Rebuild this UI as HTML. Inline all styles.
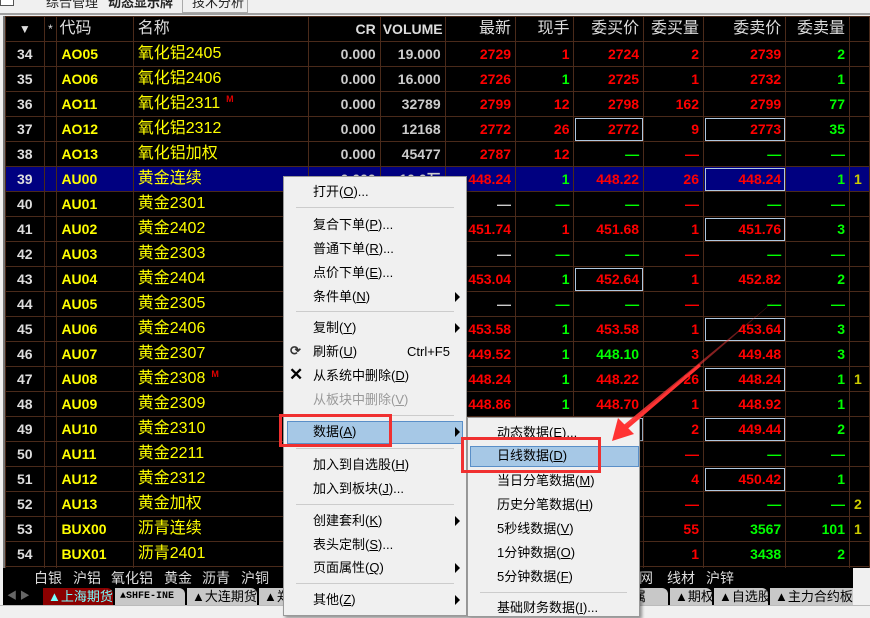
<!DOCTYPE html>
<html><head><meta charset="utf-8">
<style>
*{margin:0;padding:0;box-sizing:border-box}
body{width:870px;height:612px;overflow:hidden;background:#f0f0f0;position:relative;font-family:"Liberation Sans","Noto Sans CJK SC",sans-serif}
#top{position:absolute;left:0;top:0;width:870px;height:15px;background:#f0f0f0;border-bottom:2px solid #a0a0a0;font-size:13px;color:#222}
#grid{position:absolute;left:3px;top:16px;width:867px;height:552px;background:#000;border-left:2px solid #777;overflow:hidden}
table{border-collapse:collapse;table-layout:fixed;position:absolute;left:0;top:0}
tr{height:25px}
td{height:25px;line-height:22px;border:1px solid #4a2a1a;padding:0 4px;font-size:14px;font-weight:bold;text-align:right;white-space:nowrap;overflow:hidden;color:#f00;vertical-align:middle}
tr.h td{color:#ddd;font-weight:normal;font-size:16px}
td.n{color:#ddd;text-align:center}
td.c{color:#ff0;text-align:left}
td.m{color:#ff0;text-align:left;font-weight:normal;font-size:16px;line-height:20px}
td.w{color:#ccc}
.g{color:#0f0}.r{color:#f00}.y{color:#cc0}.wd{color:#ccc}
.bx{outline:1px solid #b0c8e0;outline-offset:-2px}
tr.sel td{background:#000080}
sup{color:#d00;font-size:9px;font-weight:bold;vertical-align:6px;margin-left:6px;line-height:0}
#cat{position:absolute;left:3px;top:568px;width:850px;height:20px;background:#000;color:#ddd;font-size:14px;line-height:20px}
#cat span{position:absolute;white-space:nowrap}
#tabs{position:absolute;left:3px;top:588px;width:850px;height:17px;background:#000;font-size:13px;line-height:17px;overflow:hidden}
.tb{position:absolute;top:0;height:17px;background:#c8c8c8;color:#000;padding-left:5px;border-radius:0 6px 0 0;white-space:nowrap;overflow:hidden}
#menu{position:absolute;left:283px;top:176px;width:184px;height:440px;background:#f0f0f0;border:1px solid #999;box-shadow:2px 2px 3px rgba(0,0,0,.4);font-size:13px;color:#000}
#sub{position:absolute;left:467px;top:417px;width:173px;height:200px;background:#f0f0f0;border:1px solid #999;box-shadow:2px 2px 3px rgba(0,0,0,.4);font-size:13px;color:#000}
.it{position:absolute;left:29px;height:20px;line-height:20px;white-space:nowrap}
.sep{position:absolute;left:12px;right:12px;height:1px;background:#ccc}
.ar{position:absolute;right:6px;width:0;height:0;border-left:5px solid #000;border-top:5px solid transparent;border-bottom:5px solid transparent}
.rb{position:absolute;border:3px solid #f03030}
</style></head><body>
<div id="top">
 <div style="position:absolute;left:0;top:-6px;width:14px;height:12px;border:1px solid #555;background:#fff"></div>
 <span style="position:absolute;left:46px;top:-8px">综合管理</span>
 <span style="position:absolute;left:108px;top:-8px;font-weight:bold">动态显示牌</span>
 <div style="position:absolute;left:182px;top:-2px;width:66px;height:15px;border:1px solid #aaa;border-top:none"></div>
 <span style="position:absolute;left:192px;top:-8px">技术分析</span>
</div>
<div id="grid">
<table>
<colgroup><col style="width:39px"><col style="width:13px"><col style="width:77px"><col style="width:177px"><col style="width:73px"><col style="width:64px"><col style="width:71px"><col style="width:59px"><col style="width:70px"><col style="width:60px"><col style="width:83px"><col style="width:64px"><col style="width:20px"></colgroup>
<tr class="h"><td class="n" style="font-size:12px">▼</td><td class="n" style="font-size:12px;padding:0">*</td><td style="text-align:left;color:#ddd;padding:0 2px">代码</td><td style="text-align:left;color:#ddd">名称</td><td style="font-weight:bold;font-size:14px">CR</td><td style="font-weight:bold;font-size:14px;text-align:left;padding:0 2px">VOLUME</td><td>最新</td><td>现手</td><td>委买价</td><td>委买量</td><td>委卖价</td><td>委卖量</td><td></td></tr>
<tr><td class="n">34</td><td></td><td class="c">AO05</td><td class="m">氧化铝2405</td><td class="w">0.000</td><td class="w">19.000</td><td>2729</td><td>1</td><td>2724</td><td>2</td><td>2739</td><td class="g">2</td><td></td></tr>
<tr><td class="n">35</td><td></td><td class="c">AO06</td><td class="m">氧化铝2406</td><td class="w">0.000</td><td class="w">16.000</td><td>2726</td><td class="g">1</td><td>2725</td><td>1</td><td>2732</td><td class="g">1</td><td></td></tr>
<tr><td class="n">36</td><td></td><td class="c">AO11</td><td class="m">氧化铝2311<sup>M</sup></td><td class="w">0.000</td><td class="w">32789</td><td>2799</td><td>12</td><td>2798</td><td>162</td><td>2799</td><td class="g">77</td><td></td></tr>
<tr><td class="n">37</td><td></td><td class="c">AO12</td><td class="m">氧化铝2312</td><td class="w">0.000</td><td class="w">12168</td><td>2772</td><td>26</td><td class="bx">2772</td><td>9</td><td class="bx">2773</td><td class="g">35</td><td></td></tr>
<tr><td class="n">38</td><td></td><td class="c">AO13</td><td class="m">氧化铝加权</td><td class="w">0.000</td><td class="w">45477</td><td>2787</td><td>12</td><td class="g">—</td><td>—</td><td class="g">—</td><td class="g">—</td><td></td></tr>
<tr class="sel"><td class="n">39</td><td></td><td class="c">AU00</td><td class="m">黄金连续</td><td class="w">0.000</td><td class="w">10.0万</td><td>448.24</td><td class="g">1</td><td>448.22</td><td>26</td><td class="bx">448.24</td><td class="g">1</td><td class="y" style="text-align:left">1</td></tr>
<tr><td class="n">40</td><td></td><td class="c">AU01</td><td class="m">黄金2301</td><td></td><td></td><td class="wd">—</td><td class="g">—</td><td class="g">—</td><td>—</td><td class="g">—</td><td class="g">—</td><td></td></tr>
<tr><td class="n">41</td><td></td><td class="c">AU02</td><td class="m">黄金2402</td><td></td><td></td><td>451.74</td><td>1</td><td>451.68</td><td>1</td><td class="bx">451.76</td><td class="g">3</td><td></td></tr>
<tr><td class="n">42</td><td></td><td class="c">AU03</td><td class="m">黄金2303</td><td></td><td></td><td class="wd">—</td><td class="g">—</td><td class="g">—</td><td>—</td><td class="g">—</td><td class="g">—</td><td></td></tr>
<tr><td class="n">43</td><td></td><td class="c">AU04</td><td class="m">黄金2404</td><td></td><td></td><td>453.04</td><td class="g">1</td><td class="bx">452.64</td><td>1</td><td>452.82</td><td class="g">2</td><td></td></tr>
<tr><td class="n">44</td><td></td><td class="c">AU05</td><td class="m">黄金2305</td><td></td><td></td><td class="wd">—</td><td class="g">—</td><td class="g">—</td><td>—</td><td class="g">—</td><td class="g">—</td><td></td></tr>
<tr><td class="n">45</td><td></td><td class="c">AU06</td><td class="m">黄金2406</td><td></td><td></td><td>453.58</td><td class="g">1</td><td>453.58</td><td>1</td><td class="bx">453.64</td><td class="g">3</td><td></td></tr>
<tr><td class="n">46</td><td></td><td class="c">AU07</td><td class="m">黄金2307</td><td></td><td></td><td>449.52</td><td class="g">1</td><td class="g">448.10</td><td>3</td><td>449.48</td><td class="g">3</td><td></td></tr>
<tr><td class="n">47</td><td></td><td class="c">AU08</td><td class="m">黄金2308<sup>M</sup></td><td></td><td></td><td>448.24</td><td class="g">1</td><td>448.22</td><td>26</td><td class="bx">448.24</td><td class="g">1</td><td class="y" style="text-align:left">1</td></tr>
<tr><td class="n">48</td><td></td><td class="c">AU09</td><td class="m">黄金2309</td><td></td><td></td><td>448.86</td><td class="g">1</td><td>448.70</td><td>1</td><td>448.92</td><td class="g">1</td><td></td></tr>
<tr><td class="n">49</td><td></td><td class="c">AU10</td><td class="m">黄金2310</td><td></td><td></td><td>449.00</td><td class="g">1</td><td class="bx">449.00</td><td>2</td><td class="bx">449.44</td><td class="g">2</td><td></td></tr>
<tr><td class="n">50</td><td></td><td class="c">AU11</td><td class="m">黄金2211</td><td></td><td></td><td class="wd">—</td><td class="g">—</td><td class="g">—</td><td>—</td><td class="g">—</td><td class="g">—</td><td></td></tr>
<tr><td class="n">51</td><td></td><td class="c">AU12</td><td class="m">黄金2312</td><td></td><td></td><td>450.40</td><td class="g">1</td><td>450.30</td><td>4</td><td class="bx">450.42</td><td class="g">1</td><td></td></tr>
<tr><td class="n">52</td><td></td><td class="c">AU13</td><td class="m">黄金加权</td><td></td><td></td><td class="wd">—</td><td class="g">—</td><td class="g">—</td><td>—</td><td class="g">—</td><td class="g">—</td><td class="y" style="text-align:left">2</td></tr>
<tr><td class="n">53</td><td></td><td class="c">BUX00</td><td class="m">沥青连续</td><td></td><td></td><td>3566</td><td class="g">1</td><td>3566</td><td>55</td><td class="g">3567</td><td class="g">101</td><td class="y" style="text-align:left">1</td></tr>
<tr><td class="n">54</td><td></td><td class="c">BUX01</td><td class="m">沥青2401</td><td></td><td></td><td>3437</td><td class="g">1</td><td>3437</td><td>1</td><td class="g">3438</td><td class="g">2</td><td></td></tr>
<tr><td class="n"></td><td></td><td class="c"></td><td class="m"></td><td></td><td></td><td></td><td></td><td></td><td></td><td></td><td></td><td></td></tr>
</table>
</div>
<div style="position:absolute;left:853px;top:568px;width:17px;height:44px;background:#f0f0f0"></div>
<div id="cat"><span style="left:31px">白银</span><span style="left:70px">沪铝</span><span style="left:108px">氧化铝</span><span style="left:161px">黄金</span><span style="left:199px">沥青</span><span style="left:238px">沪铜</span><span style="left:636px">网</span><span style="left:664px">线材</span><span style="left:703px">沪锌</span></div>
<div id="tabs">
 <span style="position:absolute;left:4px;color:#666;font-size:10px">◀ ▶</span>
 <div class="tb" style="left:40px;width:70px;background:#8b0000;color:#7ff">▲上海期货</div>
 <div class="tb" style="left:112px;width:70px;font-family:'Liberation Mono',monospace;font-size:10px;font-weight:bold">▲SHFE-INE</div>
 <div class="tb" style="left:184px;width:70px">▲大连期货</div>
 <div class="tb" style="left:256px;width:30px">▲郑</div>
 <div class="tb" style="left:625px;width:40px">属</div>
 <div class="tb" style="left:667px;width:42px">▲期权</div>
 <div class="tb" style="left:711px;width:54px">▲自选股</div>
 <div class="tb" style="left:767px;width:90px">▲主力合约板块</div>
</div>
<div style="position:absolute;left:0;top:605px;width:870px;height:7px;background:#f0f0f0;border-top:1px solid #bbb"></div>

<div id="menu">
 <div class="it" style="top:5px">打开(<u>O</u>)...</div>
 <div class="sep" style="top:30px"></div>
 <div class="it" style="top:38px">复合下单(<u>P</u>)...</div>
 <div class="it" style="top:62px">普通下单(<u>R</u>)...</div>
 <div class="it" style="top:86px">点价下单(<u>E</u>)...</div>
 <div class="it" style="top:110px">条件单(<u>N</u>)</div><div class="ar" style="top:115px"></div>
 <div class="sep" style="top:134px"></div>
 <div class="it" style="top:141px">复制(<u>Y</u>)</div><div class="ar" style="top:146px"></div>
 <div style="position:absolute;left:6px;top:166px;font-size:13px;font-weight:bold;color:#333">⟳</div>
 <div class="it" style="top:165px">刷新(<u>U</u>)</div><div style="position:absolute;left:123px;top:165px;line-height:20px">Ctrl+F5</div>
 <div style="position:absolute;left:5px;top:188px;font-size:17px;font-weight:bold">✕</div>
 <div class="it" style="top:189px">从系统中删除(<u>D</u>)</div>
 <div class="it" style="top:213px;color:#999">从板块中删除(<u>V</u>)</div>
 <div class="sep" style="top:238px"></div>
 <div style="position:absolute;left:3px;top:244px;width:176px;height:23px;background:#a6c8e6;border:1px solid #5a8fc8"></div>
 <div class="it" style="top:245px">数据(<u>A</u>)</div><div class="ar" style="top:250px"></div>
 <div class="sep" style="top:271px"></div>
 <div class="it" style="top:278px">加入到自选股(<u>H</u>)</div>
 <div class="it" style="top:302px">加入到板块(<u>J</u>)...</div>
 <div class="sep" style="top:327px"></div>
 <div class="it" style="top:334px">创建套利(<u>K</u>)</div><div class="ar" style="top:339px"></div>
 <div class="it" style="top:358px">表头定制(<u>S</u>)...</div>
 <div class="it" style="top:381px">页面属性(<u>Q</u>)</div><div class="ar" style="top:386px"></div>
 <div class="sep" style="top:406px"></div>
 <div class="it" style="top:413px">其他(<u>Z</u>)</div><div class="ar" style="top:418px"></div>
</div>
<div id="sub">
 <div class="it" style="top:5px">动态数据(<u>E</u>)...</div>
 <div style="position:absolute;left:2px;top:28px;width:169px;height:21px;background:#a6c8e6;border:1px solid #5a8fc8"></div>
 <div class="it" style="top:28px">日线数据(<u>D</u>)</div>
 <div class="it" style="top:53px">当日分笔数据(<u>M</u>)</div>
 <div class="it" style="top:77px">历史分笔数据(<u>H</u>)</div>
 <div class="it" style="top:101px">5秒线数据(<u>V</u>)</div>
 <div class="it" style="top:125px">1分钟数据(<u>O</u>)</div>
 <div class="it" style="top:149px">5分钟数据(<u>F</u>)</div>
 <div class="sep" style="top:174px"></div>
 <div class="it" style="top:180px">基础财务数据(<u>I</u>)...</div>
</div>
<div class="rb" style="left:279px;top:414px;width:113px;height:33px"></div>
<div class="rb" style="left:461px;top:437px;width:140px;height:36px"></div>
<svg style="position:absolute;left:0;top:0" width="870" height="612">
 <defs><linearGradient id="ag" x1="1" y1="0" x2="0" y2="1"><stop offset="0" stop-color="#f44" stop-opacity="0.2"/><stop offset="1" stop-color="#f33"/></linearGradient></defs>
 <polygon points="778,298 620,428 623,432" fill="url(#ag)"/>
 <line x1="700" y1="365" x2="624" y2="430" stroke="#f33" stroke-width="3"/>
 <polygon points="612,441 618,418 634,434" fill="#f33"/>
</svg>
</body></html>
